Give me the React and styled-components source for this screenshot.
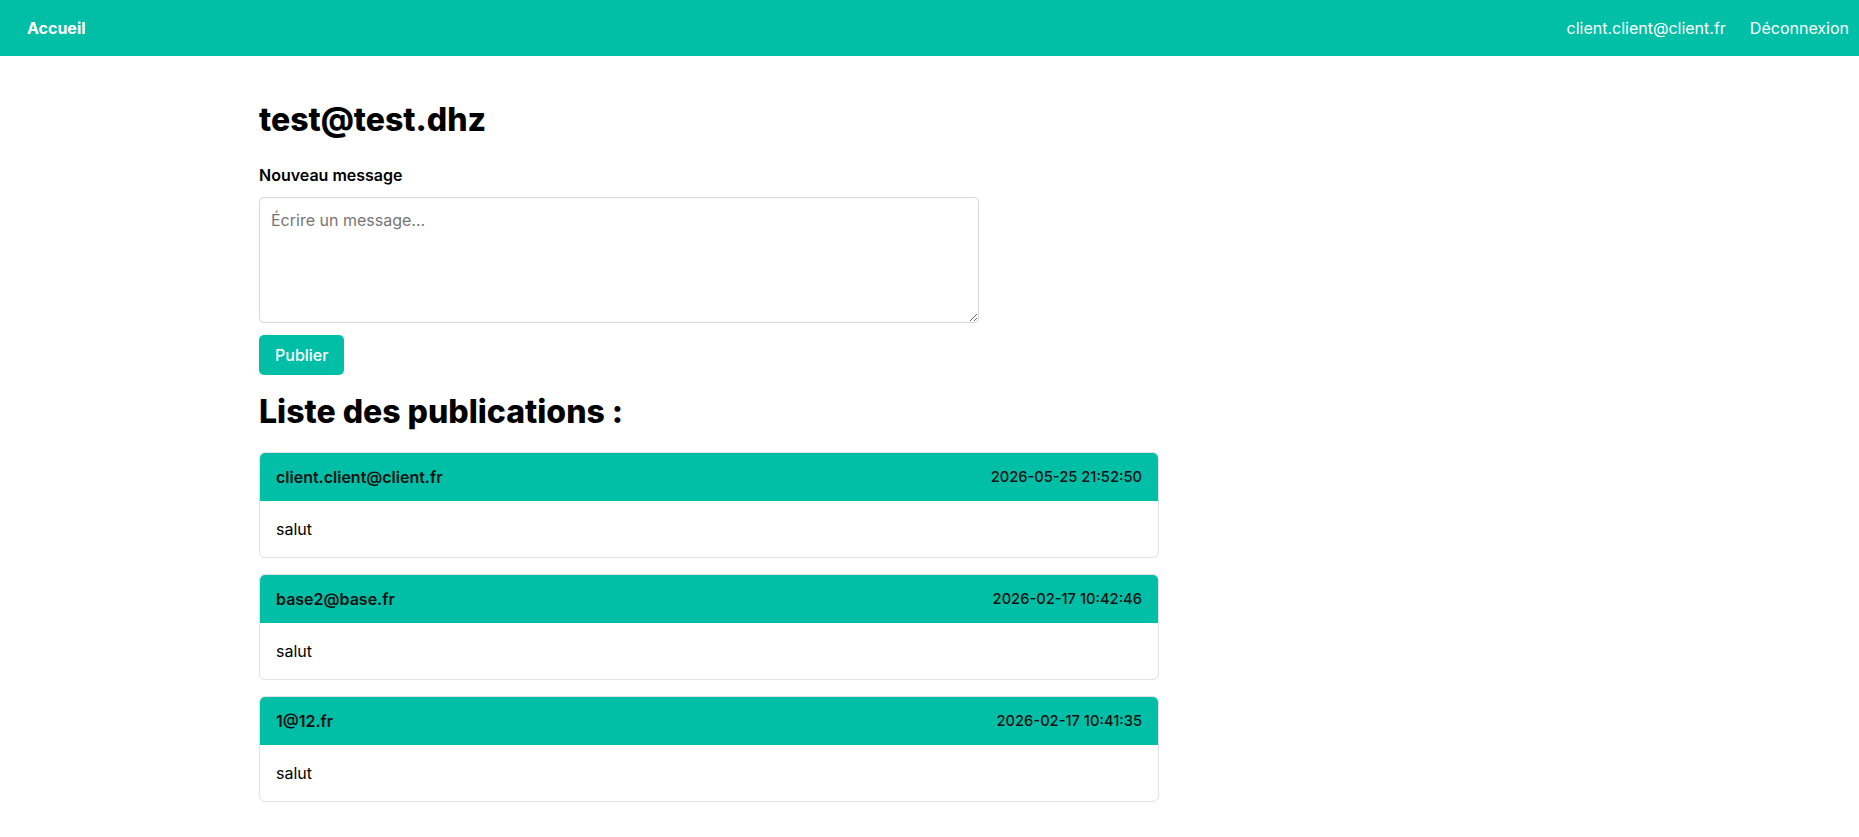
import styled, { createGlobalStyle } from "styled-components";

const GlobalStyle = createGlobalStyle`
  body {
    margin: 0;
    font-family: Inter, "Noto Sans", Arial, sans-serif;
    background: #ffffff;
    color: #000;
  }
`;

const posts = [
  { id: 1, author: "client.client@client.fr", date: "2026-05-25 21:52:50", text: "salut" },
  { id: 2, author: "base2@base.fr", date: "2026-02-17 10:42:46", text: "salut" },
  { id: 3, author: "1@12.fr", date: "2026-02-17 10:41:35", text: "salut" },
];

export default function App() {
  return (
    <>
      <GlobalStyle />
      <Navbar>
        <Brand href="#">Accueil</Brand>
        <NavLinks>
          <NavLink href="#">client.client@client.fr</NavLink>
          <NavLink href="#">Déconnexion</NavLink>
        </NavLinks>
      </Navbar>
      <Main>
        <Title>test@test.dhz</Title>
        <Form onSubmit={(e) => e.preventDefault()}>
          <Label htmlFor="msg">Nouveau message</Label>
          <TextArea id="msg" placeholder="Écrire un message..." />
          <Button type="submit">Publier</Button>
        </Form>
        <SubTitle>Liste des publications :</SubTitle>
        <List>
          {posts.map((p) => (
            <Card key={p.id}>
              <CardHeader>
                <Author>{p.author}</Author>
                <Date>{p.date}</Date>
              </CardHeader>
              <CardBody>{p.text}</CardBody>
            </Card>
          ))}
        </List>
      </Main>
    </>
  );
}

const teal = "#00bfa6";

const Navbar = styled.nav`
  height: 56px;
  background: ${teal};
  display: flex;
  align-items: center;
  justify-content: space-between;
  padding: 0 10px 0 27px;
`;

const Brand = styled.a`
  color: #fff;
  font-weight: 700;
  font-size: 16px;
  text-decoration: none;
`;

const NavLinks = styled.div`
  display: flex;
  gap: 24px;
`;

const NavLink = styled.a`
  color: #fff;
  font-size: 16px;
  text-decoration: none;
`;

const Main = styled.main`
  max-width: 1341px;
  margin: 0 auto;
  padding: 20px 0 40px;
`;

const Title = styled.h1`
  font-size: 32px;
  font-weight: 800;
  margin: 24px 0 26px;
`;

const Form = styled.form`
  display: flex;
  flex-direction: column;
  align-items: flex-start;
`;

const Label = styled.label`
  font-size: 16px;
  font-weight: 600;
  margin-bottom: 12px;
`;

const TextArea = styled.textarea`
  box-sizing: border-box;
  width: 720px;
  height: 126px;
  padding: 12px 11px;
  font-family: inherit;
  font-size: 16px;
  border: 1px solid #d6d6d6;
  border-radius: 5px;
  &::placeholder {
    color: #767676;
  }
`;

const Button = styled.button`
  margin-top: 12px;
  background: ${teal};
  color: #fff;
  border: none;
  border-radius: 5px;
  padding: 10px 16px;
  font-family: inherit;
  font-size: 16px;
  font-weight: 500;
  cursor: pointer;
`;

const SubTitle = styled.h2`
  font-size: 32px;
  font-weight: 800;
  margin: 17px 0 21px;
`;

const List = styled.div`
  display: flex;
  flex-direction: column;
  gap: 16px;
  width: 900px;
`;

const Card = styled.article`
  border: 1px solid #e2e2e2;
  border-radius: 6px;
  overflow: hidden;
`;

const CardHeader = styled.header`
  background: ${teal};
  display: flex;
  justify-content: space-between;
  align-items: center;
  padding: 14px 16px;
`;

const Author = styled.span`
  font-size: 16px;
  font-weight: 600;
  color: #111;
`;

const Date = styled.span`
  font-size: 14.7px;
  font-weight: 500;
  color: #111;
`;

const CardBody = styled.div`
  padding: 18px 16px;
  font-size: 16px;
`;
